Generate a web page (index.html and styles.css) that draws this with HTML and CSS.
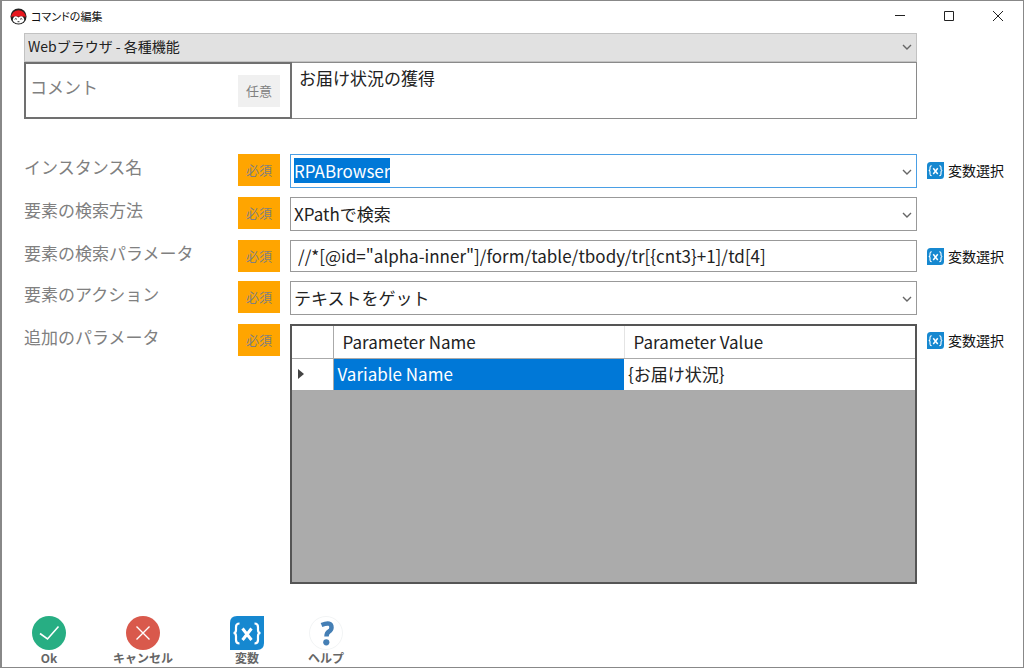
FILE: index.html
```html
<!DOCTYPE html>
<html lang="ja">
<head>
<meta charset="utf-8">
<meta name="viewport" content="width=device-width, initial-scale=1">
<title>コマンドの編集</title>
<link rel="stylesheet" href="styles.css">
</head>
<body>
<svg class="sprite" aria-hidden="true">
  <symbol id="var-icon" viewBox="0 0 34 34">
    <path d="M7 0H34V27Q34 34 27 34H0V7Q0 0 7 0Z" fill="#1688d0"/>
    <g fill="none" stroke="#fff">
      <path d="M9.500 7.500Q6 7.500 6 11V14Q6 17 3.500 17Q6 17 6 20V24Q6 27.500 9.500 27.500M24.500 7.500Q28 7.500 28 11V14Q28 17 30.500 17Q28 17 28 20V24Q28 27.500 24.500 27.500" stroke-width="2.200"/>
      <path d="M12.500 12.500L21.500 24M21.500 12.500L12.500 24" stroke-width="3"/>
    </g>
  </symbol>
  <symbol id="chevron" viewBox="0 0 10 6"><path d="M1 1L5 5L9 1" fill="none" stroke="#666" stroke-width="1.400"/></symbol>
</svg>
<div class="window">
  <header class="titlebar">
    <svg class="app-icon" viewBox="0 0 18 18" aria-hidden="true">
      <circle cx="9" cy="9" r="8.500" fill="#222"/>
      <path d="M1.300 10A7.700 7.700 0 1 1 16.700 10Q16 8.500 14 9H4Q2 8.500 1.300 10Z" fill="#e8171f"/>
      <path d="M3.500 10.500Q5 7.500 9 10Q13 7.500 14.500 10.500Q16 13 13.500 15Q9 18 4.500 15Q2 13 3.500 10.500Z" fill="#fff"/>
      <path d="M5 12Q6.200 10.300 7.300 12M10.700 12Q11.800 10.300 13 12M8 14.500H10" fill="none" stroke="#222" stroke-width="1"/>
    </svg>
    <h1 class="title">コマンドの編集</h1>
    <div class="window-controls">
      <button type="button" aria-label="最小化"><svg viewBox="0 0 12 12"><path d="M1 5.500H11"/></svg></button>
      <button type="button" aria-label="最大化"><svg viewBox="0 0 12 12"><path d="M1.500 1.500H10.500V10.500H1.500Z"/></svg></button>
      <button type="button" aria-label="閉じる"><svg viewBox="0 0 12 12"><path d="M1 1L11 11M11 1L1 11"/></svg></button>
    </div>
  </header>
  <main class="content">
    <div class="combo combo-command">
      <select class="field" aria-label="コマンド"><option>Webブラウザ - 各種機能</option></select>
      <svg class="chevron" aria-hidden="true"><use href="#chevron"/></svg>
    </div>
    <div class="comment">
      <div class="comment-head">
        <label for="comment">コメント</label>
        <span class="badge badge-optional">任意</span>
      </div>
      <textarea id="comment" class="comment-text">お届け状況の獲得</textarea>
    </div>
    <form class="rows">
      <div class="row">
        <label class="row-label" for="instance">インスタンス名</label>
        <span class="badge">必須</span>
        <div class="combo">
          <input id="instance" class="field field-active" type="text" value="RPABrowser" autocomplete="off" spellcheck="false">
          <svg class="chevron" aria-hidden="true"><use href="#chevron"/></svg>
        </div>
        <button type="button" class="pick"><svg aria-hidden="true"><use href="#var-icon"/></svg>変数選択</button>
      </div>
      <div class="row">
        <label class="row-label" for="method">要素の検索方法</label>
        <span class="badge">必須</span>
        <div class="combo">
          <select id="method" class="field"><option>XPathで検索</option></select>
          <svg class="chevron" aria-hidden="true"><use href="#chevron"/></svg>
        </div>
      </div>
      <div class="row">
        <label class="row-label" for="param">要素の検索パラメータ</label>
        <span class="badge">必須</span>
        <input id="param" class="field field-plain" type="text" spellcheck="false" value="//*[@id=&quot;alpha-inner&quot;]/form/table/tbody/tr[{cnt3}+1]/td[4]">
        <button type="button" class="pick"><svg aria-hidden="true"><use href="#var-icon"/></svg>変数選択</button>
      </div>
      <div class="row">
        <label class="row-label" for="action">要素のアクション</label>
        <span class="badge">必須</span>
        <div class="combo">
          <select id="action" class="field"><option>テキストをゲット</option></select>
          <svg class="chevron" aria-hidden="true"><use href="#chevron"/></svg>
        </div>
      </div>
      <div class="row row-grid">
        <span class="row-label" id="extra">追加のパラメータ</span>
        <span class="badge">必須</span>
        <div class="grid-box">
          <table class="grid" aria-labelledby="extra">
            <thead><tr><th class="handle"></th><th>Parameter Name</th><th>Parameter Value</th></tr></thead>
            <tbody><tr>
              <td class="handle"><svg viewBox="0 0 6 10" aria-hidden="true"><path d="M0 0L6 5L0 10Z" fill="#444"/></svg></td>
              <td class="selected">Variable Name</td>
              <td>{お届け状況}</td>
            </tr></tbody>
          </table>
        </div>
        <button type="button" class="pick"><svg aria-hidden="true"><use href="#var-icon"/></svg>変数選択</button>
      </div>
    </form>
  </main>
  <footer class="actions">
    <button type="button" class="action action-ok"><svg viewBox="0 0 34 34" aria-hidden="true"><circle cx="17" cy="17" r="17" fill="#27ae83"/><path d="M8 17.500L15.500 23L26.500 10.500" fill="none" stroke="#fff" stroke-width="1.600"/></svg>Ok</button>
    <button type="button" class="action action-cancel"><svg viewBox="0 0 34 34" aria-hidden="true"><circle cx="17" cy="17" r="17" fill="#d9594c"/><path d="M10.500 10.500L23.500 23.500M23.500 10.500L10.500 23.500" fill="none" stroke="#fff" stroke-width="1.400"/></svg>キャンセル</button>
    <button type="button" class="action action-variables"><svg aria-hidden="true"><use href="#var-icon"/></svg>変数</button>
    <button type="button" class="action"><svg viewBox="0 0 34 34" aria-hidden="true"><circle cx="17" cy="17" r="16.500" fill="none" stroke="#f2f4f5"/><path d="M12.500 9Q22.500 5 22.500 11.500Q22.500 14 20 15.500Q17.500 17 17.500 20.500" fill="none" stroke="#457fb5" stroke-width="4.500"/><circle cx="17.300" cy="26.300" r="3.100" fill="#457fb5"/></svg>ヘルプ</button>
  </footer>
</div>
<script src="app.js"></script>
</body>
</html>
```
FILE: styles.css
```css
*, *::before, *::after { box-sizing: border-box; }

body {
  margin: 0;
  background: #fff;
  color: #222;
  font-family: "Noto Sans CJK JP", sans-serif;
  font-size: 17px;
  line-height: 24px;
}

button, input, select, textarea { font: inherit; color: inherit; }
button { margin: 0; padding: 0; border: 0; background: none; }

.sprite { display: none; }

.window {
  display: flex;
  flex-direction: column;
  min-height: 100vh;
  border: 1px solid #888;
  border-width: 1px 1px 1px 2px;
}

.titlebar {
  display: flex;
  align-items: center;
  height: 32px;
  padding: 0 1px 2px 8px;
}
.app-icon { width: 17px; height: 17px; margin-right: 4px; }
.title {
  margin: 0;
  color: #111;
  font-size: 11px;
  font-weight: 400;
  line-height: 16px;
  font-feature-settings: "palt";
}
.window-controls { display: flex; margin-left: auto; }
.window-controls button {
  display: grid;
  place-items: center;
  width: 49px;
  height: 30px;
}
.window-controls svg {
  width: 12px;
  height: 12px;
  fill: none;
  stroke: #222;
}

.content {
  display: flex;
  flex: 1;
  flex-direction: column;
  padding: 0 0 0 22px;
}

.combo { position: relative; display: flex; }
.chevron {
  position: absolute;
  top: 50%;
  right: 5px;
  width: 10px;
  height: 6px;
  margin-top: -2px;
  pointer-events: none;
}
.field {
  width: 100%;
  min-width: 0;
  height: 34px;
  padding: 0 20px 1px 3px;
  border: 1px solid #999;
  border-radius: 0;
  outline: 0;
  background: #fff;
  appearance: none;
}
.field-active { border-color: #4a9fe5; }
.field-active::selection { background: #0078d7; color: #fff; }
.field-plain { height: 32px; padding: 0 8px 1px 7px; }

.combo-command { margin-right: 106px; }
.combo-command .field {
  height: 29px;
  padding-bottom: 3px;
  border-color: #c2c2c2;
  background: #e1e1e1;
  font-size: 14px;
}
.combo-command .chevron { margin-top: -4px; }

.comment {
  display: flex;
  height: 57px;
  margin-right: 106px;
}
.comment-head {
  display: flex;
  justify-content: space-between;
  width: 268px;
  padding: 11px 10px 0 4px;
  border: 2px solid #707070;
  color: #808080;
}
.comment-text {
  flex: 1;
  min-width: 0;
  padding: 3px 7px;
  border: 1px solid #8a8a8a;
  border-left: 0;
  outline: 0;
  resize: none;
}

.badge {
  display: grid;
  place-items: center;
  width: 42px;
  height: 32px;
  background: #ffa500;
  color: #808080;
  font-size: 13px;
  line-height: 20px;
}
.badge-optional { background: #f0f0f0; }

.rows {
  display: flex;
  flex: 1;
  flex-direction: column;
  gap: 9px;
  padding-top: 35px;
}
.row {
  display: grid;
  grid-template-columns: 214px 42px minmax(0, 1fr) 96px;
  align-items: start;
}
.row > :nth-child(3) { margin: 0 10px; width: auto; }
.row-label { padding-top: 1px; color: #808080; }
.row-grid { flex: 1; align-items: stretch; grid-template-rows: 1fr; }
.row-grid > .badge { align-self: start; }

.pick {
  display: flex;
  align-items: center;
  align-self: start;
  gap: 4px;
  height: 32px;
  color: #111;
  font-size: 14px;
  line-height: 20px;
  white-space: nowrap;
}
.pick svg { width: 17px; height: 17px; }

.grid-box {
  border: 2px solid #555;
  background: #ababab;
}
.grid {
  width: 100%;
  border-collapse: collapse;
  table-layout: fixed;
  background: #fff;
}
.grid th, .grid td {
  height: 32px;
  padding: 0 4px;
  border-bottom: 1px solid #aaa;
  font-weight: 400;
  text-align: left;
}
.grid th { padding-left: 9px; border-right: 1px solid #e4e4e4; }
.grid th:last-child { border-right: 0; }
.grid .handle { width: 41px; border-right: 1px solid #aaa; padding: 0 0 0 6px; }
.handle svg { display: block; width: 6px; height: 10px; }
.grid .selected { background: #0078d7; color: #fff; }

.actions {
  display: flex;
  align-items: start;
  gap: 24px;
  padding: 32px 0 1px 20px;
}
.action {
  display: flex;
  flex-direction: column;
  align-items: center;
  color: #666;
  font-size: 12px;
  font-weight: 700;
  line-height: 16px;
}
.action svg { width: 34px; height: 34px; }
.action-ok { width: 54px; }
.action-cancel { width: 86px; }
.action-variables { width: 74px; }
```
FILE: app.js
```js
const instance = document.getElementById("instance");
instance.focus();
instance.select();
```
